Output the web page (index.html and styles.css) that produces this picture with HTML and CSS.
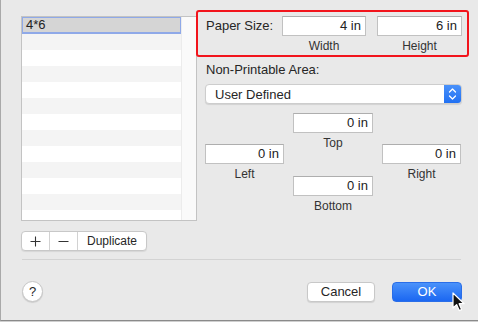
FILE: index.html
```html
<!DOCTYPE html>
<html lang="en">
<head>
    <meta charset="UTF-8">
    <title>Paper Size</title>
    <link rel="stylesheet" href="styles.css">
</head>
<body>

    <div class="dialog">
        <div class="main">
            <div class="sidebar">
                <div class="list">
                    <div class="rows">
                        <div class="row selected">4*6</div>
                        <div class="row"></div>
                        <div class="row"></div>
                        <div class="row"></div>
                        <div class="row"></div>
                        <div class="row"></div>
                        <div class="row"></div>
                        <div class="row"></div>
                        <div class="row"></div>
                        <div class="row"></div>
                        <div class="row"></div>
                        <div class="row"></div>
                        <div class="row last"></div>
                    </div>
                    <div class="scroll-track"></div>
                </div>
                <div class="segmented">
                    <button class="seg seg-icon">
                        <svg width="11" height="11" viewBox="0 0 11 11"><path d="M5.5 0.5v10M0.5 5.5h10" stroke="#333" stroke-width="1.1" fill="none"/></svg>
                    </button>
                    <button class="seg seg-icon">
                        <svg width="11" height="11" viewBox="0 0 11 11"><path d="M0.5 5.5h10" stroke="#333" stroke-width="1.1" fill="none"/></svg>
                    </button>
                    <button class="seg seg-text">Duplicate</button>
                </div>
            </div>

            <div class="panel">
                <div class="paper-size">
                    <span class="paper-label">Paper Size:</span>
                    <div class="field field-width">
                        <div class="input">4 in</div>
                        <div class="caption">Width</div>
                    </div>
                    <div class="field field-height">
                        <div class="input">6 in</div>
                        <div class="caption">Height</div>
                    </div>
                </div>

                <div class="area">
                    <div class="area-label">Non-Printable Area:</div>
                    <div class="select">
                        <span class="select-text">User Defined</span>
                        <span class="stepper">
                            <svg width="9" height="14" viewBox="0 0 9 14"><path d="M1.5 5l3-3 3 3M1.5 9l3 3 3-3" stroke="#fff" stroke-width="1.3" fill="none" stroke-linecap="round" stroke-linejoin="round"/></svg>
                        </span>
                    </div>

                    <div class="margins">
                        <div class="col col-side">
                            <div class="input">0 in</div>
                            <div class="caption">Left</div>
                        </div>
                        <div class="col col-mid">
                            <div class="input">0 in</div>
                            <div class="caption">Top</div>
                            <div class="input input-bottom">0 in</div>
                            <div class="caption">Bottom</div>
                        </div>
                        <div class="col col-side">
                            <div class="input">0 in</div>
                            <div class="caption">Right</div>
                        </div>
                    </div>
                </div>
            </div>
        </div>

        <div class="separator"></div>

        <div class="footer">
            <button class="help">?</button>
            <div class="actions">
                <button class="btn btn-cancel">Cancel</button>
                <button class="btn btn-ok">OK</button>
            </div>
        </div>

        <svg class="cursor" width="13" height="20" viewBox="0 0 13 20">
            <path d="M1 1v15l3.6-3.4 2.6 6 2.4-1-2.5-5.9h5z" fill="#111" stroke="#fff" stroke-width="1.2" stroke-linejoin="round"/>
        </svg>
    </div>

</body>
</html>
```

FILE: styles.css
```css
/* Page */
body {
    margin: 0;
    padding: 0;
    background-color: #cfcfcf;
    font-family: 'Liberation Sans', Arial, sans-serif;
    font-size: 13px;
    color: #262626;
}

button {
    font-family: inherit;
    font-size: 13px;
    color: #262626;
    padding: 0;
    margin: 0;
}

.dialog {
    position: relative;
    box-sizing: border-box;
    width: 478px;
    height: 321px;
    background-color: #e9e9e9;
    border-left: 1px solid #a9a9a9;
    border-bottom: 1px solid #8a8a8a;
    padding: 10px 16px 0 20px;
}

.main {
    display: flex;
    align-items: flex-start;
}

/* Left list */
.sidebar {
    margin-top: 6px;
    width: 176px;
    flex-shrink: 0;
}

.list {
    display: flex;
    height: 205px;
    box-sizing: border-box;
    border: 1px solid #c3c3c3;
    background-color: #fff;
    overflow: hidden;
}

.rows {
    width: 159px;
}

.row {
    height: 16px;
    line-height: 16px;
    padding-left: 4px;
    font-size: 12px;
}

.row:nth-child(even) {
    background-color: #f4f4f4;
}

.row.selected {
    height: 17px;
    line-height: 16px;
    font-size: 13px;
    background-color: #d5d5d5;
    box-shadow: inset 0 0 0 1px #8fa9e8, inset 0 -2px 0 #8fa9e8;
    color: #222;
}

.scroll-track {
    flex: 1;
    background-color: #fafafa;
    border-left: 1px solid #ececec;
}

.segmented {
    display: flex;
    margin-top: 10px;
    width: 126px;
    height: 20px;
    box-sizing: border-box;
    background-color: #fff;
    border: 1px solid #c8c8c8;
    border-radius: 4px;
    box-shadow: 0 1px 1px rgba(0, 0, 0, 0.08);
    overflow: hidden;
}

.seg {
    border: none;
    background: none;
    height: 18px;
    display: flex;
    align-items: center;
    justify-content: center;
}

.seg-icon {
    width: 28px;
    border-right: 1px solid #d2d2d2;
}

.seg-text {
    flex: 1;
    font-size: 12px;
}

/* Right panel */
.panel {
    margin-left: -1px;
    width: 273px;
}

.paper-size {
    display: flex;
    align-items: flex-start;
    box-sizing: border-box;
    height: 47px;
    border: 2px solid #f2141c;
    border-radius: 3px;
    padding: 4px 5px 0 8px;
}

.paper-label {
    width: 76px;
    line-height: 20px;
}

.field-width {
    width: 84px;
    margin-right: 11px;
}

.field-height {
    width: 85px;
}

.input {
    box-sizing: border-box;
    height: 20px;
    line-height: 18px;
    background-color: #fff;
    border: 1px solid #c1c1c1;
    border-top-color: #aeaeae;
    text-align: right;
    padding-right: 4px;
    color: #222;
}

.caption {
    text-align: center;
    font-size: 12px;
    line-height: 16px;
    margin-top: 2px;
    color: #333;
}

.area {
    padding-left: 9px;
    width: 257px;
}

.area-label {
    margin-top: 5px;
    padding-left: 1px;
    line-height: 16px;
}

.select {
    display: flex;
    align-items: center;
    margin-top: 6px;
    height: 20px;
    box-sizing: border-box;
    background-color: #fff;
    border: 1px solid #cdcdcd;
    border-radius: 4px;
    box-shadow: 0 1px 1px rgba(0, 0, 0, 0.1);
    overflow: hidden;
}

.select-text {
    flex: 1;
    padding-left: 9px;
}

.stepper {
    width: 17px;
    height: 20px;
    display: flex;
    align-items: center;
    justify-content: center;
    background: linear-gradient(#4c93fa, #1f6ff2);
}

.margins {
    display: grid;
    grid-template-columns: 79px 80px 79px;
    column-gap: 9px;
    margin-top: 9px;
}

.col-side {
    padding-top: 31px;
}

.input-bottom {
    margin-top: 25px;
}

/* Footer */
.separator {
    height: 1px;
    background-color: #d3d3d3;
    margin: 8px 1px 0 1px;
}

.footer {
    display: flex;
    justify-content: space-between;
    align-items: center;
    margin-top: 21px;
    padding-left: 1px;
}

.help {
    width: 21px;
    height: 21px;
    border-radius: 50%;
    border: 1px solid #c6c6c6;
    background-color: #fff;
    box-shadow: 0 1px 1px rgba(0, 0, 0, 0.12);
    font-size: 13px;
}

.actions {
    display: flex;
    gap: 17px;
}

.btn {
    height: 20px;
    border-radius: 4px;
}

.btn-cancel {
    width: 68px;
    background-color: #fff;
    border: 1px solid #c8c8c8;
    box-shadow: 0 1px 1px rgba(0, 0, 0, 0.1);
}

.btn-ok {
    width: 70px;
    border: 1px solid #2a6ee8;
    background: linear-gradient(#4a92fa, #1b67f1);
    color: #fff;
}

.cursor {
    position: absolute;
    left: 451px;
    top: 292px;
}
```
